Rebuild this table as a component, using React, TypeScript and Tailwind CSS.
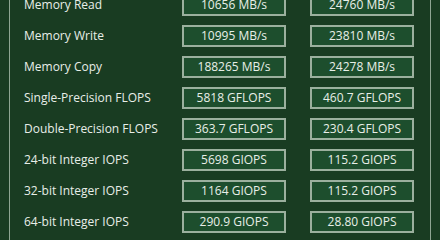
import React from "react";

const rows: [string, string, string][] = [
  ["Memory Read", "10656 MB/s", "24760 MB/s"],
  ["Memory Write", "10995 MB/s", "23810 MB/s"],
  ["Memory Copy", "188265 MB/s", "24278 MB/s"],
  ["Single-Precision FLOPS", "5818 GFLOPS", "460.7 GFLOPS"],
  ["Double-Precision FLOPS", "363.7 GFLOPS", "230.4 GFLOPS"],
  ["24-bit Integer IOPS", "5698 GIOPS", "115.2 GIOPS"],
  ["32-bit Integer IOPS", "1164 GIOPS", "115.2 GIOPS"],
  ["64-bit Integer IOPS", "290.9 GIOPS", "28.80 GIOPS"],
];

export default function App() {
  return (
    <div
      className="w-[440px] h-[240px] overflow-hidden bg-[#193c22] text-[#e8eee8] text-[12px] flex"
      style={{ fontFamily: '"Open Sans", "Noto Sans", sans-serif' }}
    >
      <div className="ml-[9px] w-[422px] h-full border-l border-r border-[#8fa593]">
        <div className="mt-[-6px] flex flex-col gap-[9px] pl-[14px]">
          {rows.map(([label, a, b]) => (
            <div key={label} className="flex items-center h-[22px]">
              <div className="w-[158px] leading-none">{label}</div>
              <div className="w-[104px] h-[22px] border-2 border-[#9bb09e] bg-[#1d4e2d] flex items-center justify-center leading-none">
                {a}
              </div>
              <div className="w-[24px]" />
              <div className="w-[104px] h-[22px] border-2 border-[#9bb09e] bg-[#1d4e2d] flex items-center justify-center leading-none">
                {b}
              </div>
            </div>
          ))}
        </div>
      </div>
    </div>
  );
}
